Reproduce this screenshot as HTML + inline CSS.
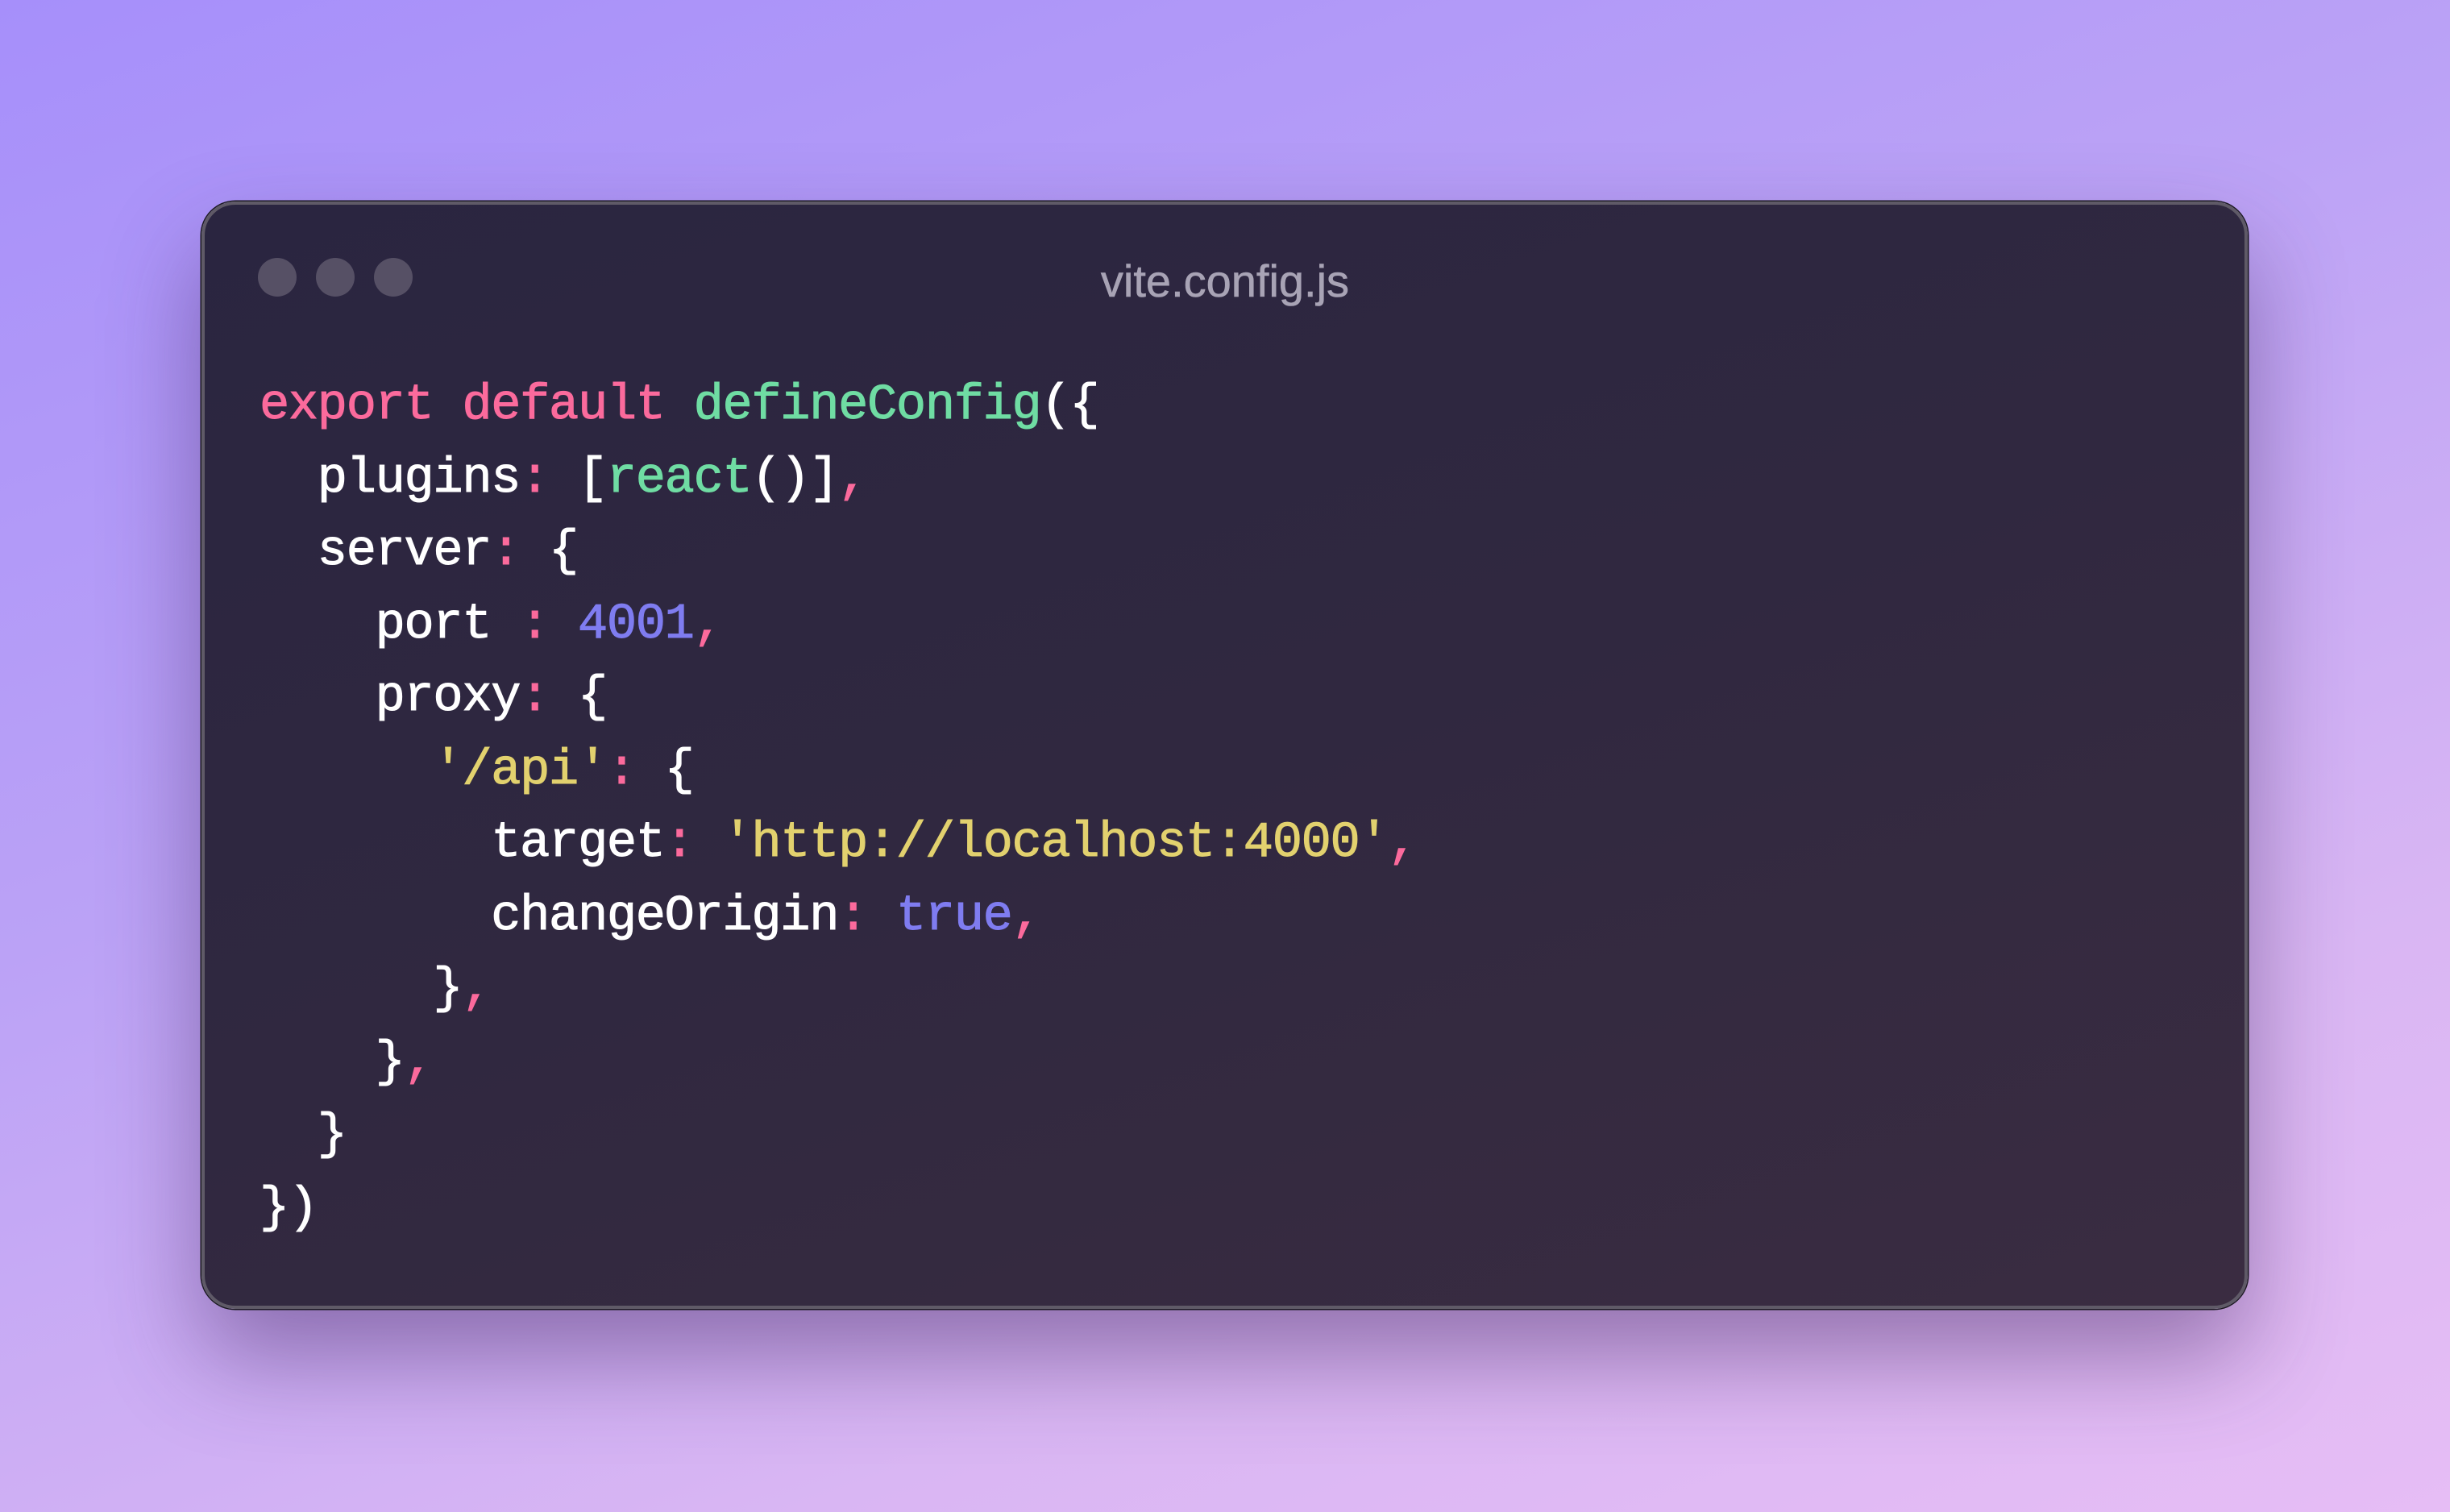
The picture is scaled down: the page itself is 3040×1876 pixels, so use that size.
<!DOCTYPE html>
<html><head><meta charset="utf-8"><style>
html,body{margin:0;padding:0;width:3040px;height:1876px;overflow:hidden}
body{background:linear-gradient(160deg,#a68ffa 0%,#bba2f6 40%,#d9b6f3 75%,#e6bdf5 100%);position:relative;font-family:"Liberation Sans",sans-serif}
.win{position:absolute;left:250px;top:250px;width:2539px;height:1374px;box-sizing:border-box;border-radius:42px;
background:linear-gradient(160deg,#2a2540 0%,#302840 50%,#3a2c41 100%);
border:4px solid #5f5a67;box-shadow:0 0 0 1.5px #1c1a22,0 60px 120px rgba(60,30,90,0.45)}
.dot{position:absolute;top:66px;width:48px;height:48px;border-radius:50%;background:#565065}
.title{position:absolute;left:0;right:0;top:319px;text-align:center;color:#a8a3b5;font-size:56px;line-height:60px;-webkit-text-stroke:0.6px #a8a3b5}
pre{position:absolute;left:322px;top:458px;margin:0;font-family:"Liberation Mono",monospace;font-size:62px;line-height:90.5px;letter-spacing:-1.3px;color:#ffffff;-webkit-text-stroke:1px currentColor}
.k{color:#fb6a9c}.f{color:#6fdca3}.n{color:#7f7cf0}.s{color:#e2d16e}.p{color:#fb6a9c}
</style></head><body>
<div class="win">
<div class="dot" style="left:66px"></div>
<div class="dot" style="left:138px"></div>
<div class="dot" style="left:210px"></div>
</div>
<div class="title">vite.config.js</div>
<pre><span class="k">export</span> <span class="k">default</span> <span class="f">defineConfig</span>({
  plugins<span class="p">:</span> [<span class="f">react</span>()]<span class="p">,</span>
  server<span class="p">:</span> {
    port <span class="p">:</span> <span class="n">4001</span><span class="p">,</span>
    proxy<span class="p">:</span> {
      <span class="s">'/api'</span><span class="p">:</span> {
        target<span class="p">:</span> <span class="s">'http://localhost:4000'</span><span class="p">,</span>
        changeOrigin<span class="p">:</span> <span class="n">true</span><span class="p">,</span>
      }<span class="p">,</span>
    }<span class="p">,</span>
  }
})</pre>
</body></html>
